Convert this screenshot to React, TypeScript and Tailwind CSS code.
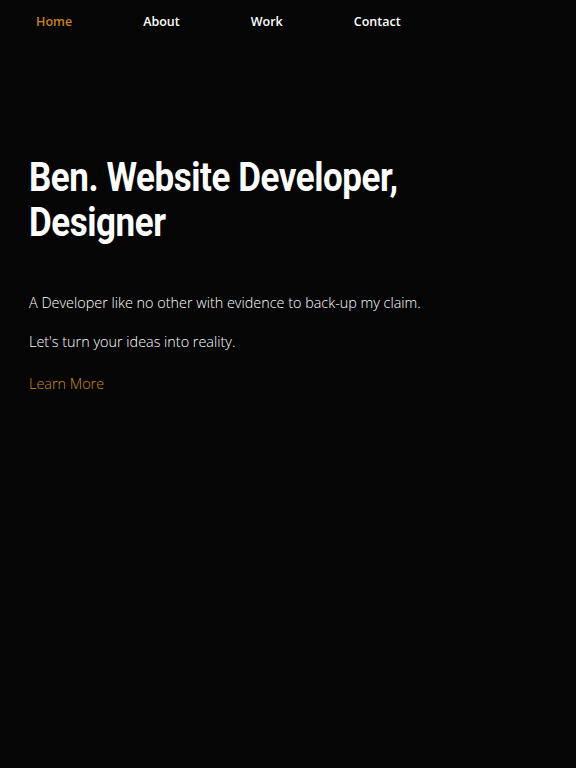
export default function App() {
  return (
    <div className="min-h-[768px] bg-[#050505] text-white">
      <nav className="flex items-center gap-[71px] pl-9 h-[44px] text-[12.5px] font-semibold font-['Open_Sans','Liberation_Sans',sans-serif]">
        <a className="text-[#c9821a]">Home</a>
        <a>About</a>
        <a>Work</a>
        <a>Contact</a>
      </nav>
      <main className="px-[29px] pt-[111px]">
        <h1 className="text-[40px] leading-[45px] font-bold tracking-[-0.5px] font-['Roboto',sans-serif] origin-left scale-x-[0.874]">
          Ben. Website Developer,
          <br />
          Designer
        </h1>
        <div className="mt-[46px] text-[14.4px] leading-[24px] font-light font-['Open_Sans','Liberation_Sans',sans-serif]">
          <p>A Developer like no other with evidence to back-up my claim.</p>
          <p className="mt-[15px]">Let's turn your ideas into reality.</p>
          <a className="block mt-[18px] text-[#d08a1c]">Learn More</a>
        </div>
      </main>
    </div>
  );
}
